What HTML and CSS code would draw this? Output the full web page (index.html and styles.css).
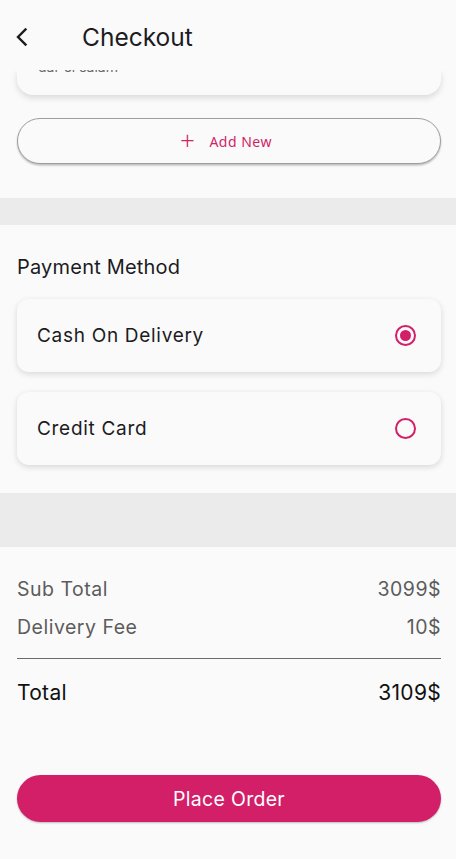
FILE: index.html
```html
<!DOCTYPE html>
<html>
<head>
<meta charset="utf-8">
<link rel="stylesheet" href="styles.css">
</head>
<body>
<div class="screen">
  <header class="appbar">
    <button class="back" aria-label="Back">
      <svg width="24" height="24" viewBox="0 0 24 24"><path d="M15.5 4.5 L8 12 L15.5 19.5" fill="none" stroke="#1c1b1f" stroke-width="2.4" stroke-linecap="square"/></svg>
    </button>
    <h1 class="title">Checkout</h1>
  </header>
  <main class="content">
    <section class="address">
      <div class="clip">
        <div class="addr-card">
          <p class="addr-text">dar el salam</p>
        </div>
      </div>
      <button class="add-new"><span class="plus">+</span>Add New</button>
    </section>
    <div class="band band-thin"></div>
    <section class="payment">
      <h2 class="section-title">Payment Method</h2>
      <div class="option">
        <span>Cash On Delivery</span>
        <span class="radio checked"></span>
      </div>
      <div class="option">
        <span>Credit Card</span>
        <span class="radio"></span>
      </div>
    </section>
    <div class="band band-thick"></div>
    <section class="summary">
      <div class="row muted"><span>Sub Total</span><span>3099$</span></div>
      <div class="row muted"><span>Delivery Fee</span><span>10$</span></div>
      <hr class="rule">
      <div class="row total"><span>Total</span><span>3109$</span></div>
      <button class="place">Place Order</button>
    </section>
  </main>
</div>
</body>
</html>
```

FILE: styles.css
```css
* { box-sizing: border-box; }
html, body { margin: 0; padding: 0; }
body {
  background: #fafafa;
  font-family: Inter, "Noto Sans", sans-serif;
  color: #1c1b1f;
  width: 456px;
  height: 859px;
  overflow: hidden;
}
.screen { display: flex; flex-direction: column; }
.appbar {
  height: 70px;
  display: flex;
  align-items: center;
  padding-left: 10px;
  background: #fafafa;
  position: relative;
  z-index: 2;
}
.back {
  background: none;
  border: 0;
  padding: 0;
  width: 24px;
  height: 24px;
  display: flex;
  margin-top: 4px;
}
.title {
  margin: 4px 0 0 48px;
  font-size: 24.5px;
  font-weight: 400;
}
.content { display: flex; flex-direction: column; }
.address { padding: 0 15px 0 17px; display: flex; flex-direction: column; }
.clip {
  height: 34px;
  overflow: hidden;
  padding: 0 10px 10px;
  margin: 0 -10px;
}
.addr-card {
  height: 25px;
  background: #fafafa;
  border-radius: 0 0 16px 16px;
  box-shadow: 0 3px 6px rgba(0,0,0,0.13);
  position: relative;
}
.addr-text {
  margin: 0;
  position: absolute;
  left: 21px;
  top: -12px;
  font-size: 14px;
  color: #6a6a6a;
}
.add-new {
  margin-top: 14px;
  height: 46px;
  border-radius: 23px;
  border: 1px solid #9e9e9e;
  background: #fafafa;
  box-shadow: 0 1.5px 2px rgba(0,0,0,0.25);
  color: #d31e68;
  font-family: "Noto Sans", Inter, sans-serif;
  font-size: 14px;
  letter-spacing: 0.5px;
  display: flex;
  align-items: center;
  justify-content: center;
  padding: 0 6px 0 0;
}
.plus {
  font-size: 26px;
  font-weight: 300;
  margin-right: 14px;
  margin-top: -3px;
}
.band { background: #ebebeb; }
.band-thin { height: 27px; margin-top: 34px; }
.band-thick { height: 54px; }
.payment {
  padding: 27px 15px 28px 17px;
  display: flex;
  flex-direction: column;
  gap: 20px;
}
.section-title {
  margin: 0 0 -3px;
  font-size: 20px;
  font-weight: 400;
  line-height: 30px;
  letter-spacing: 0.2px;
}
.option {
  height: 73px;
  background: #fafafa;
  border-radius: 12px;
  box-shadow: 0 2px 6px rgba(0,0,0,0.14);
  display: flex;
  align-items: center;
  justify-content: space-between;
  padding: 0 25px 0 20px;
  font-size: 19px;
  letter-spacing: 0.7px;
}
.radio {
  width: 21px;
  height: 21px;
  border-radius: 50%;
  border: 2px solid #d31e68;
  display: flex;
  align-items: center;
  justify-content: center;
}
.radio.checked::after {
  content: "";
  width: 11px;
  height: 11px;
  border-radius: 50%;
  background: #d31e68;
}
.summary {
  padding: 23px 15px 0 17px;
  display: flex;
  flex-direction: column;
}
.row {
  display: flex;
  justify-content: space-between;
  align-items: center;
  font-size: 19.5px;
  letter-spacing: 0.5px;
  height: 38px;
}
.muted { color: #5c5c5c; }
.rule {
  margin: 12px 0 14px;
  border: 0;
  border-top: 1.5px solid #6b6b6b;
}
.total { font-size: 21px; color: #111; letter-spacing: 0.3px; }
.place {
  margin-top: 64px;
  height: 47px;
  border: 0;
  border-radius: 24px;
  background: #d31e68;
  color: #fff;
  font-family: Inter, "Noto Sans", sans-serif;
  font-size: 19.5px;
  letter-spacing: 0.3px;
  box-shadow: 0 1px 2px rgba(0,0,0,0.25);
}
```
